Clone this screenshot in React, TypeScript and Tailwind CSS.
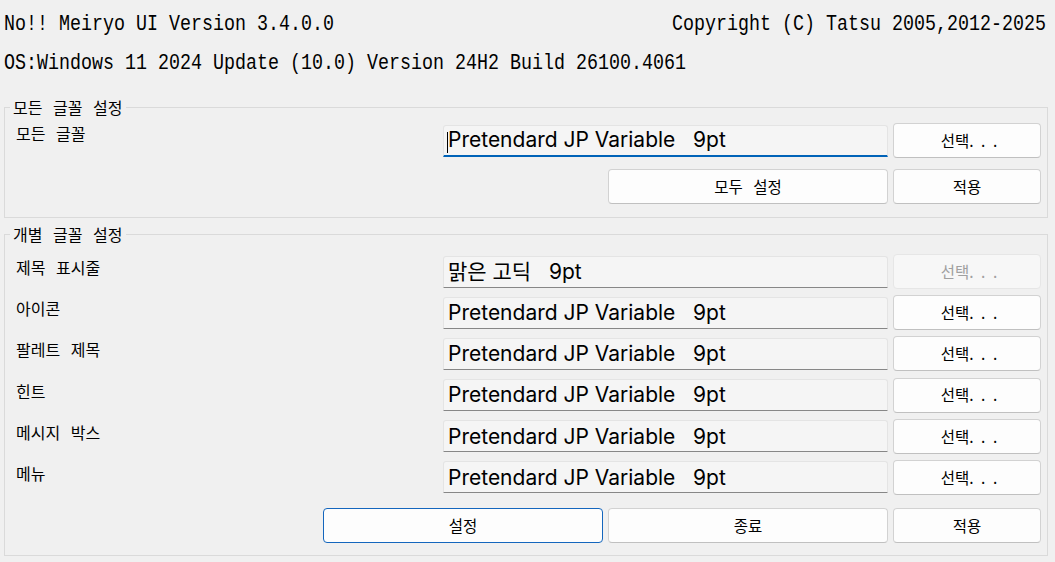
const rows: [string, string, boolean][] = [
  ["제목 표시줄", "맑은 고딕   9pt", true],
  ["아이콘", "Pretendard JP Variable   9pt", false],
  ["팔레트 제목", "Pretendard JP Variable   9pt", false],
  ["힌트", "Pretendard JP Variable   9pt", false],
  ["메시지 박스", "Pretendard JP Variable   9pt", false],
  ["메뉴", "Pretendard JP Variable   9pt", false],
];

function Button({
  children,
  width = "w-[148px]",
  disabled = false,
  focused = false,
}: {
  children: React.ReactNode;
  width?: string;
  disabled?: boolean;
  focused?: boolean;
}) {
  return (
    <button
      type="button"
      disabled={disabled}
      className={`${width} h-[35px] shrink-0 rounded-[4px] border text-[15.5px] leading-none [word-spacing:7px] ${
        disabled
          ? "border-[#e6e6e6] bg-[#f7f7f7] text-[#a0a0a0]"
          : focused
            ? "border-[#1466bd] bg-[#fdfdfd] text-black"
            : "border-[#d2d2d2] border-b-[#c0c0c0] bg-[#fdfdfd] text-black"
      }`}
    >
      {children}
    </button>
  );
}

function SelectButton({ disabled = false }: { disabled?: boolean }) {
  return (
    <Button disabled={disabled}>
      <span className="pl-[4px] [word-spacing:4px]">선택. . .</span>
    </Button>
  );
}

function Field({ value, focused = false }: { value: string; focused?: boolean }) {
  return (
    <div
      className={`relative flex h-[32px] w-[445px] shrink-0 items-center whitespace-pre rounded-t-[3px] border border-[#e4e4e4] bg-[#f5f5f5] pl-[4px] font-['Inter','Noto_Sans_CJK_KR',sans-serif] text-[21px] text-black ${
        focused ? "border-b-2 border-b-[#0063b8]" : "border-b-[#878787]"
      }`}
    >
      {focused && <span className="absolute left-[3px] top-[6px] h-[21px] w-px bg-black" />}
      {value}
    </div>
  );
}

function Legend({ children }: { children: React.ReactNode }) {
  return (
    <legend className="ml-[5px] px-[3px] text-[16px] leading-[20px] [word-spacing:7px]">
      {children}
    </legend>
  );
}

export default function App() {
  return (
    <div className="h-[562px] w-[1055px] overflow-hidden bg-[#f0f0f0] font-['Noto_Sans_CJK_KR',sans-serif] text-black">
      <div className="pt-[5px] font-['Liberation_Mono',monospace] text-[18.33px] leading-[39px]">
        <div className="flex origin-center scale-y-[1.2] justify-between pl-[4px] pr-[9px]">
          <span>No!! Meiryo UI Version 3.4.0.0</span>
          <span>Copyright (C) Tatsu 2005,2012-2025</span>
        </div>
        <div className="origin-center scale-y-[1.2] pl-[4px]">
          OS:Windows 11 2024 Update (10.0) Version 24H2 Build 26100.4061
        </div>
      </div>

      <fieldset className="ml-[4px] mt-[14px] w-[1044px] border border-[#dadada] pb-[13px]">
        <Legend>모든 글꼴 설정</Legend>
        <div className="flex flex-col gap-[11px] pt-[6px]">
          <div className="flex items-center gap-[5px]">
            <div className="w-[433px] self-start pl-[11px] text-[16px] leading-[20px] [word-spacing:7px]">
              모든 글꼴
            </div>
            <Field value="Pretendard JP Variable   9pt" focused />
            <SelectButton />
          </div>
          <div className="flex justify-end gap-[5px] pr-[6px]">
            <Button width="w-[280px]">모두 설정</Button>
            <Button>적용</Button>
          </div>
        </div>
      </fieldset>

      <fieldset className="ml-[4px] mt-[6px] w-[1044px] border border-[#dadada] pb-[12px]">
        <Legend>개별 글꼴 설정</Legend>
        <div className="flex flex-col gap-[6.2px] pt-[10px]">
          {rows.map(([label, value, disabled]) => (
            <div key={label} className="flex items-center gap-[5px]">
              <div className="w-[433px] self-start pl-[11px] pt-[3px] text-[16px] leading-[20px] [word-spacing:7px]">
                {label}
              </div>
              <Field value={value} />
              <SelectButton disabled={disabled} />
            </div>
          ))}
          <div className="mt-[7px] flex justify-end gap-[5px] pr-[6px]">
            <Button width="w-[280px]" focused>
              설정
            </Button>
            <Button width="w-[280px]">종료</Button>
            <Button>적용</Button>
          </div>
        </div>
      </fieldset>
    </div>
  );
}
